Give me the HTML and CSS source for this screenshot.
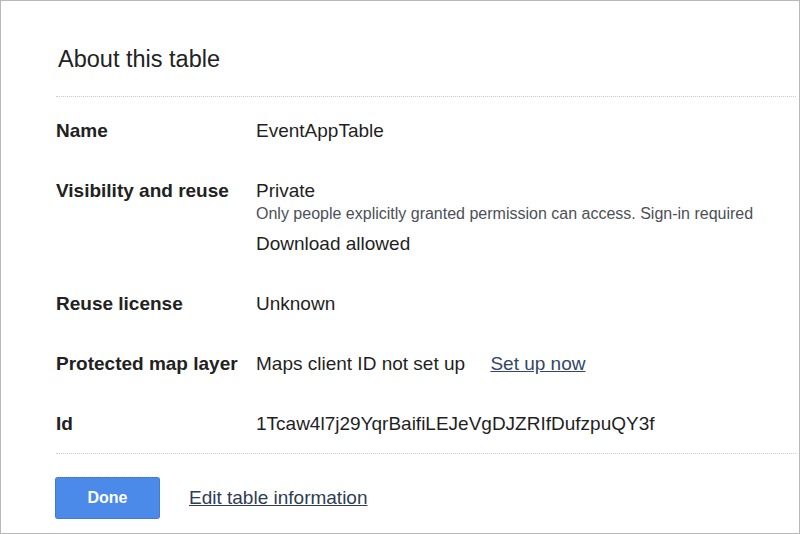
FILE: index.html
```html
<!DOCTYPE html>
<html>
<head>
<meta charset="utf-8">
<link rel="stylesheet" href="styles.css">
</head>
<body>
<div class="dialog">
  <h1 class="title">About this table</h1>
  <div class="rows">
    <div class="row">
      <div class="label">Name</div>
      <div class="value">EventAppTable</div>
    </div>
    <div class="row">
      <div class="label">Visibility and reuse</div>
      <div class="value">
        <div>Private</div>
        <div class="sub">Only people explicitly granted permission can access. Sign-in required</div>
        <div class="download">Download allowed</div>
      </div>
    </div>
    <div class="row">
      <div class="label">Reuse license</div>
      <div class="value">Unknown</div>
    </div>
    <div class="row">
      <div class="label">Protected map layer</div>
      <div class="value">Maps client ID not set up <a class="setup" href="#">Set up now</a></div>
    </div>
    <div class="row">
      <div class="label">Id</div>
      <div class="value">1Tcaw4l7j29YqrBaifiLEJeVgDJZRIfDufzpuQY3f</div>
    </div>
  </div>
  <div class="actions">
    <button class="done">Done</button>
    <a class="edit" href="#">Edit table information</a>
  </div>
</div>
</body>
</html>
```

FILE: styles.css
```css
html, body {
  margin: 0;
  padding: 0;
  background: #ffffff;
}
body {
  font-family: "Liberation Sans", Arial, sans-serif;
  color: #222;
}
.dialog {
  box-sizing: border-box;
  width: 800px;
  height: 534px;
  border: 1px solid #b9b9b9;
  padding: 0 3px 0 55px;
  overflow: hidden;
}
.title {
  margin: 44px 0 0 0;
  font-size: 23.5px;
  line-height: 28px;
  font-weight: normal;
  color: #222;
  padding-bottom: 23px;
  border-bottom: 1px dotted #c6cdd5;
  text-indent: 2px;
}
.rows {
  display: flex;
  flex-direction: column;
  gap: 38px;
  padding: 23px 0 18px;
  border-bottom: 1px dotted #c9cdd2;
}
.row {
  display: grid;
  grid-template-columns: 200px 1fr;
  font-size: 19px;
  line-height: 22px;
}
.label {
  font-weight: bold;
  color: #222;
}
.value {
  color: #1f1f1f;
}
.sub {
  font-size: 16px;
  line-height: 20px;
  margin-top: 2px;
  color: #4c5058;
}
.download {
  margin-top: 9px;
}
.setup {
  margin-left: 20px;
  color: #33466a;
  text-decoration: underline;
}
.actions {
  display: flex;
  align-items: center;
  gap: 29px;
  padding-top: 23px;
}
.done {
  margin-left: -1px;
  width: 105px;
  height: 42px;
  box-sizing: border-box;
  background: #4b8ae9;
  border: 1px dotted #3b6cbb;
  border-radius: 3px;
  color: #fff;
  font-family: "Liberation Sans", Arial, sans-serif;
  font-weight: bold;
  font-size: 16px;
  padding: 0;
}
.edit {
  font-size: 19px;
  line-height: 22px;
  color: #2f3d55;
  text-decoration: underline;
}
```
